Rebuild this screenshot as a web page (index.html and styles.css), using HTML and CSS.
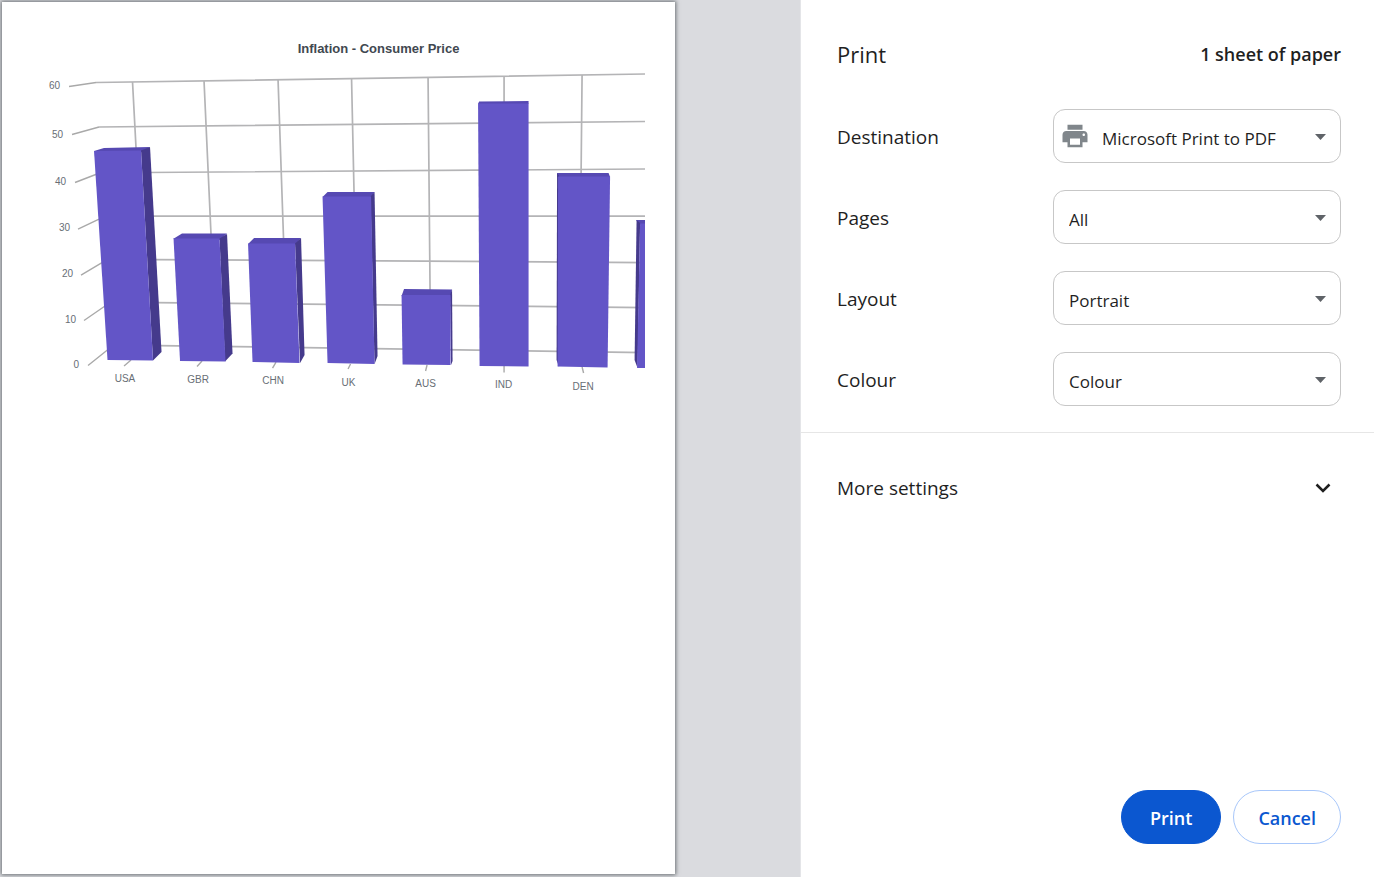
FILE: index.html
```html
<!DOCTYPE html>
<html lang="en-GB">
<head>
<meta charset="utf-8">
<meta name="viewport" content="width=device-width, initial-scale=1">
<title>Print</title>
<link rel="stylesheet" href="styles.css">
</head>
<body>
<div class="dialog">
  <main class="preview">
    <div class="sheet">
      <svg class="chart" viewBox="2 2 643 400" role="img" aria-label="Inflation - Consumer Price">
        <g class="grid">
          <path d="M96 82.5L645 74M99 127L645 121.500M145 172.500L645 169M148 216H645M153 259.500L645 262.500M155 302.500L645 307.500M158 345.500L645 352.500"/>
          <path d="M132.500 82L136 148M204 81L211 235M278 79.500L283.500 239M351.500 78.500L354 193M428 77.500L430 290M504 76L504 102M582 75L581 174"/>
        </g>
        <path class="tick" d="M69 86.500L96 82.500M72 134.500L99 127M75 182.500L97 174M78 229L99 219M81 275L102 262.500M84 320.500L105 306M88 365.500L108 349.500M131 360L124 366M202 361L197 366.500M276 362L272.500 368M350.500 364L348 369M427 365L425.500 371M504 366L504 372.500M582 367L583.500 373"/>
        <g class="top">
          <path d="M94 151L104 148L150 147L142 152z"/>
          <path d="M173 239L182 233.500L227 233.500L220 240z"/>
          <path d="M248 244L254 238H301L295 245z"/>
          <path d="M322.500 197L327.500 192H374.500L371 198z"/>
          <path d="M401.500 296L404 289L452 289.500L450.500 296z"/>
          <path d="M478 104L479 101.500L528.500 101V104z"/>
          <path d="M557 177V173H608.500L610 177z"/>
          <path d="M636 220H645V225H639z"/>
        </g>
        <g class="side">
          <path d="M141 150.500L150 147L161.500 352L153 360.500z"/>
          <path d="M219.500 238.500L227 234L232.500 353.500L225 361.500z"/>
          <path d="M295 243.500L301 238L304.500 355L300 363z"/>
          <path d="M370.500 196.500L374.500 192L377.500 356L374.500 364z"/>
          <path d="M450 295L452 289.500L452.500 361L451 365z"/>
          <path d="M557 173L559 176V367L556.500 360z"/>
          <path d="M636.500 220L640 223L637.500 368L634.500 360z"/>
        </g>
        <g class="front">
          <path d="M94 151L141 150.500L153 360.500L107.500 360z"/>
          <path d="M173.500 238.500H219.500L225.500 361.500L180 361z"/>
          <path d="M248 243.500H295L299.500 363L252.500 362z"/>
          <path d="M322.500 196.500H371L374.500 364L327.500 363z"/>
          <path d="M401.500 295H450.500V365L402.500 364.500z"/>
          <path d="M478 103.500H528.500V366.500L479.500 366z"/>
          <path d="M558 176.500H610L607.500 367.500L557.500 366.500z"/>
          <path d="M640 223.500H645V368H637z"/>
        </g>
        <text class="title" x="378.500" y="53">Inflation - Consumer Price</text>
        <g class="value">
          <text x="60" y="89">60</text>
          <text x="63" y="138">50</text>
          <text x="66" y="185">40</text>
          <text x="70" y="231">30</text>
          <text x="73" y="277">20</text>
          <text x="76" y="323">10</text>
          <text x="79" y="368">0</text>
        </g>
        <g class="category">
          <text x="125" y="382">USA</text>
          <text x="198" y="383">GBR</text>
          <text x="273" y="384">CHN</text>
          <text x="348.500" y="386">UK</text>
          <text x="425.500" y="387">AUS</text>
          <text x="503.500" y="388">IND</text>
          <text x="583" y="390">DEN</text>
        </g>
      </svg>
    </div>
  </main>
  <form class="settings">
    <header class="heading">
      <h1>Print</h1>
      <span class="count">1 sheet of paper</span>
    </header>
    <div class="fields">
      <div class="field">
        <label for="destination">Destination</label>
        <div class="picker with-icon">
          <select id="destination"><option>Microsoft Print to PDF</option></select>
          <svg class="printer" viewBox="0 0 24 24" aria-hidden="true"><path d="M19 8H5c-1.700 0-3 1.300-3 3v6h4v4h12v-4h4v-6c0-1.700-1.300-3-3-3zm-3 11H8v-5h8v5zm3-7c-.6 0-1-.4-1-1s.4-1 1-1 1 .4 1 1-.4 1-1 1zM18 3H6v4h12V3z"/></svg>
          <svg class="arrow" viewBox="0 0 11 6" aria-hidden="true"><path d="M0 0H11L5.500 6z"/></svg>
        </div>
      </div>
      <div class="field">
        <label for="pages">Pages</label>
        <div class="picker">
          <select id="pages"><option>All</option></select>
          <svg class="arrow" viewBox="0 0 11 6" aria-hidden="true"><path d="M0 0H11L5.500 6z"/></svg>
        </div>
      </div>
      <div class="field">
        <label for="layout">Layout</label>
        <div class="picker">
          <select id="layout"><option>Portrait</option></select>
          <svg class="arrow" viewBox="0 0 11 6" aria-hidden="true"><path d="M0 0H11L5.500 6z"/></svg>
        </div>
      </div>
      <div class="field">
        <label for="colour">Colour</label>
        <div class="picker">
          <select id="colour"><option>Colour</option></select>
          <svg class="arrow" viewBox="0 0 11 6" aria-hidden="true"><path d="M0 0H11L5.500 6z"/></svg>
        </div>
      </div>
    </div>
    <button class="more" type="button" aria-expanded="false">
      More settings
      <svg class="chevron" viewBox="0 0 16 10" aria-hidden="true"><path d="M1.500 1.500L8 8L14.500 1.500"/></svg>
    </button>
    <footer class="actions">
      <button class="action primary" type="submit">Print</button>
      <button class="action cancel" type="button">Cancel</button>
    </footer>
  </form>
</div>
</body>
</html>
```
FILE: styles.css
```css
* {
  box-sizing: border-box;
}

body {
  margin: 0;
  color: #1f1f1f;
  font: 19px/26px "Open Sans", "Noto Sans", sans-serif;
}

.dialog {
  display: flex;
  min-height: 100vh;
}

.preview {
  flex: 1;
  display: flex;
  padding: 2px 0 3px 2px;
  background: #dadbdf;
  border-right: 1px solid #e4e5e8;
}

.sheet {
  width: 84.3%;
  background: #fff;
  box-shadow: 0 0 4px 1px #6b7074;
}

.chart {
  display: block;
  width: 95.6%;
  font-family: "Liberation Sans", Arial, sans-serif;
}

.grid {
  fill: none;
  stroke: #b4b4b6;
  stroke-width: 1.7;
}

.tick {
  fill: none;
  stroke: #a9a9a9;
  stroke-width: 1.4;
}

.top {
  fill: #5649b2;
}

.side {
  fill: #453a8c;
}

.front {
  fill: #6355c7;
}

.title {
  fill: #414850;
  font-size: 13px;
  font-weight: 700;
  text-anchor: middle;
}

.value,
.category {
  fill: #686e75;
  font-size: 10px;
}

.value {
  text-anchor: end;
}

.category {
  text-anchor: middle;
}

.settings {
  flex: 0 0 573px;
  display: flex;
  flex-direction: column;
  background: #fff;
}

.heading {
  display: flex;
  align-items: center;
  justify-content: space-between;
  padding: 39px 33px 0 36px;
  line-height: 30px;
}

h1 {
  margin: 0;
  font-size: 22px;
  font-weight: 400;
}

.count {
  font-size: 18px;
  font-weight: 600;
}

.fields {
  display: flex;
  flex-direction: column;
  gap: 27px;
  padding: 40px 33px 26px 36px;
  border-bottom: 1px solid #e6e6e6;
}

.field {
  display: flex;
  align-items: center;
  justify-content: space-between;
}

.field label {
  padding-top: 2px;
}

.picker {
  position: relative;
  width: 288px;
}

select {
  appearance: none;
  width: 100%;
  height: 54px;
  padding: 6px 40px 0 15px;
  border: 1px solid #c7c7c7;
  border-radius: 12px;
  background: #fff;
  color: inherit;
  font: inherit;
  font-size: 17px;
}

.with-icon select {
  padding-left: 48px;
}

.printer {
  position: absolute;
  left: 7px;
  top: 12px;
  width: 30px;
  height: 30px;
  fill: #80868b;
}

.arrow {
  position: absolute;
  right: 15px;
  top: 25px;
  width: 11px;
  height: 6px;
  fill: #5f6368;
  pointer-events: none;
}

.more {
  display: flex;
  align-items: center;
  justify-content: space-between;
  margin-top: 28px;
  padding: 14px 43px 14px 36px;
  border: 0;
  background: none;
  color: inherit;
  font: inherit;
}

.chevron {
  width: 16px;
  height: 10px;
  fill: none;
  stroke: #1f1f1f;
  stroke-width: 2.5;
}

.actions {
  display: flex;
  justify-content: flex-end;
  gap: 12px;
  margin-top: auto;
  padding: 0 33px 33px 36px;
}

.action {
  height: 54px;
  padding: 2px 24px 0;
  border: 1px solid #a8c7fa;
  border-radius: 27px;
  background: #fff;
  color: #0b57d0;
  font: inherit;
  font-size: 18px;
  font-weight: 600;
}

.primary {
  padding: 2px 28px 0;
  border-color: #0b57d0;
  background: #0b57d0;
  color: #fff;
}
```
